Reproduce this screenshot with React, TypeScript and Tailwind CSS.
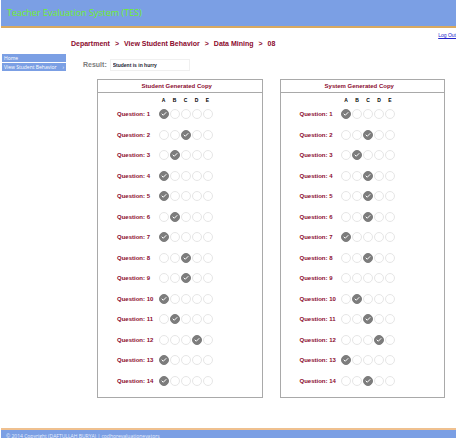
import { Check } from "lucide-react";

const OPTIONS = ["A", "B", "C", "D", "E"];

const studentAnswers = ["A", "C", "B", "A", "A", "B", "A", "C", "C", "A", "B", "D", "A", "A"];
const systemAnswers = ["A", "C", "B", "C", "C", "C", "A", "C", "", "B", "C", "D", "A", "C"];

type CopyProps = {
  id: string;
  title: string;
  answers: string[];
};

function Bubble({ name, label, checked }: { name: string; label: string; checked: boolean }) {
  return (
    <span className="relative mx-auto block h-[10px] w-[10px]">
      <input
        type="radio"
        name={name}
        aria-label={label}
        defaultChecked={checked}
        className="peer block h-[10px] w-[10px] appearance-none rounded-full border border-[#e6e6e6] bg-white checked:border-[#7c7c7c] checked:bg-[#7c7c7c]"
      />
      <Check
        strokeWidth={4}
        className="pointer-events-none absolute inset-0 m-auto hidden h-[6px] w-[6px] text-white peer-checked:block"
      />
    </span>
  );
}

function AnswerCopy({ id, title, answers }: CopyProps) {
  return (
    <section className="flex-1 border border-[#a9a9a9]">
      <h2 className="border-b border-[#a9a9a9] pr-[6px] text-center text-[6px] leading-[12px] font-bold text-[#8b0a2e]">
        {title}
      </h2>
      <table className="mt-[3px] mb-[6px] ml-[19px] h-[295px] table-fixed border-collapse text-[6px] leading-[8px]">
        <thead>
          <tr>
            <th className="h-[8px] w-[41px] p-0"></th>
            {OPTIONS.map((option) => (
              <th key={option} scope="col" className="h-[8px] w-[11px] p-0 text-[5px] text-black">
                {option}
              </th>
            ))}
          </tr>
        </thead>
        <tbody>
          {answers.map((answer, i) => (
            <tr key={i}>
              <th scope="row" className="h-5 p-0 text-left whitespace-nowrap text-[#8b0a2e]">
                Question: {i + 1}
              </th>
              {OPTIONS.map((option) => (
                <td key={option} className="p-0">
                  <Bubble
                    name={`${id}-${i + 1}`}
                    label={`Question ${i + 1}, ${option}`}
                    checked={answer === option}
                  />
                </td>
              ))}
            </tr>
          ))}
        </tbody>
      </table>
    </section>
  );
}

export default function App() {
  return (
    <div className="flex h-screen flex-col overflow-hidden bg-white pl-px font-['Liberation_Sans',Arial,sans-serif]">
      <header className="shrink-0 border-b-2 border-[#d9a95f] bg-[#7b9fe4] pl-[6px]">
        <h1 className="font-['Open_Sans',sans-serif] text-[9px] leading-[26px] text-[#6ff02c]">
          Teacher Evaluation System (TES)
        </h1>
      </header>

      <div className="flex h-3 shrink-0 items-end justify-end">
        <a href="#logout" className="text-[5px] leading-[10px] whitespace-nowrap text-[#2222cc] underline">
          Log Out
        </a>
      </div>

      <div className="flex flex-1 items-start">
        <nav className="mt-[14px] ml-px flex w-16 shrink-0 flex-col gap-px font-['Open_Sans',sans-serif] text-[5px] leading-[8px] text-white">
          <a href="#home" className="bg-[#7b9fe4] px-[2px]">
            Home
          </a>
          <a href="#behavior" className="flex justify-between bg-[#7b9fe4] px-[2px]">
            View Student Behavior <span>›</span>
          </a>
        </nav>

        <main className="min-w-0 flex-1 pr-[11px] pl-[5px]">
          <p className="flex gap-[5px] text-[7px] leading-[8px] font-bold text-[#8b0a2e]">
            <span>Department</span>
            <span>&gt;</span>
            <span>View Student Behavior</span>
            <span>&gt;</span>
            <span>Data Mining</span>
            <span>&gt;</span>
            <span>08</span>
          </p>

          <div className="mt-[11px] ml-3 flex items-center gap-[3px]">
            <label htmlFor="result" className="text-[7px] leading-[10px] font-bold text-[#7d7d7d]">
              Result:
            </label>
            <input
              id="result"
              defaultValue="Student is in hurry"
              className="h-3 w-20 border border-[#f0f0f0] px-[2px] text-[5px] font-bold text-[#1c2433]"
            />
          </div>

          <div className="mt-2 ml-[26px] flex gap-[17px]">
            <AnswerCopy id="student" title="Student Generated Copy" answers={studentAnswers} />
            <AnswerCopy id="system" title="System Generated Copy" answers={systemAnswers} />
          </div>
        </main>
      </div>

      <footer className="h-[10px] shrink-0 overflow-hidden border-t-2 border-[#efc08f] bg-[#7b9fe4] pl-[5px] font-['Open_Sans',sans-serif] text-[5px] leading-[12px] text-[#e6eefc]">
        © 2014 Copyright (DAFTULLAH BURYA) | codhorevaluationevators
      </footer>
    </div>
  );
}
